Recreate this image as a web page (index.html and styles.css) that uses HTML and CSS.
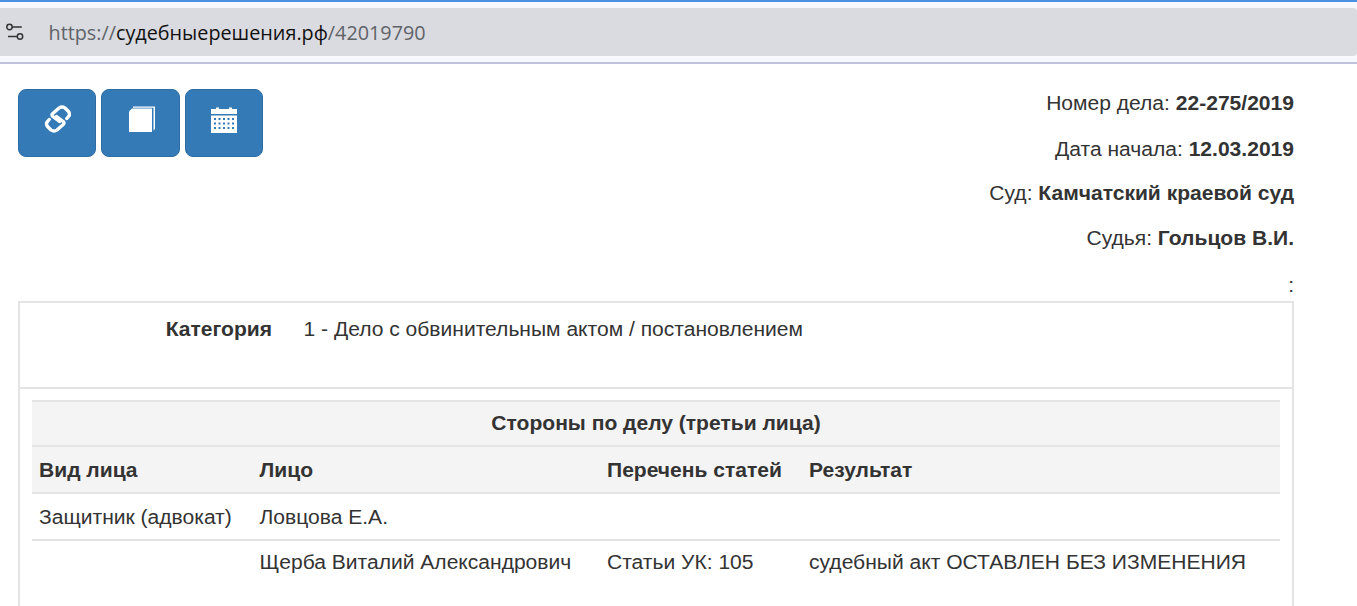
FILE: index.html
```html
<!DOCTYPE html>
<html lang="ru">
<head>
<meta charset="utf-8">
<title>Дело 22-275/2019</title>
<link rel="stylesheet" href="styles.css">
</head>
<body>
<header class="chrome">
  <div class="addr">
    <svg class="tune" width="20" height="18" viewBox="0 0 20 18" fill="none" stroke="#333" stroke-width="1.5"><circle cx="4.5" cy="4" r="2.7"/><path d="M7.2 4H16.800"/><circle cx="15" cy="13.500" r="2.7"/><path d="M3 13.500H12.300"/></svg>
    <span class="url"><span class="dim">https://</span>судебныерешения.рф<span class="dim">/42019790</span></span>
  </div>
</header>
<main class="page">
  <div class="top">
    <div class="btns">
      <a class="btn b1"><svg width="28" height="28" viewBox="-1 0 28 28" fill="none" stroke="#fff" stroke-width="3.400" stroke-linecap="round" stroke-linejoin="round"><path d="M15.500 16.500L8.800 11.500Q7.300 10 8.800 8.500L15 3Q18 .8 21 3L24.500 6.500Q26.500 9.500 24.500 11.500L22.800 13.500"/><path transform="rotate(180 14 14)" d="M15.500 16.500L8.800 11.500Q7.300 10 8.800 8.500L15 3Q18 .8 21 3L24.500 6.500Q26.500 9.500 24.500 11.500L22.800 13.500"/></svg></a>
      <a class="btn b2"><svg width="28" height="28" viewBox="-2 0 28 28"><path fill="#fff" d="M0 6.500L3 3.500H23V27H0z"/><path fill="#fff" d="M4 1.500H26V24L24.500 25.500V2.800H4z"/></svg></a>
      <a class="btn b3"><svg width="28" height="28" viewBox="0 0 28 28"><path fill="#fff" fill-rule="evenodd" d="M1 4h5V2.500h3V4h10V2.500h3V4h5v5H1zM1 10.500h26V28H1zM4 13v2h2v-2zm4.500 0v2h2v-2zm4.500 0v2h2v-2zm4.500 0v2h2v-2zm4.500 0v2h2v-2zM4 17.500v2h2v-2zm4.500 0v2h2v-2zm4.500 0v2h2v-2zm4.500 0v2h2v-2zm4.500 0v2h2v-2zM4 22v2h2v-2zm4.500 0v2h2v-2zm4.500 0v2h2v-2zm4.500 0v2h2v-2zm4.500 0v2h2v-2z"/></svg></a>
    </div>
    <div class="info">
      <p>Номер дела: <b>22-275/2019</b></p>
      <p>Дата начала: <b>12.03.2019</b></p>
      <p>Суд: <b>Камчатский краевой суд</b></p>
      <p>Судья: <b>Гольцов В.И.</b></p>
      <p>:</p>
    </div>
  </div>
  <section class="panel">
    <div class="cat">
      <b class="cat-l">Категория</b>
      <span>1 - Дело с обвинительным актом / постановлением</span>
    </div>
    <div class="body">
      <table>
        <colgroup><col class="c1"><col class="c2"><col class="c3"><col></colgroup>
        <thead>
          <tr class="h"><th colspan="4" class="title">Стороны по делу (третьи лица)</th></tr>
          <tr class="h"><th>Вид лица</th><th>Лицо</th><th>Перечень статей</th><th>Результат</th></tr>
        </thead>
        <tbody>
          <tr class="r1"><td>Защитник (адвокат)</td><td>Ловцова Е.А.</td><td></td><td></td></tr>
          <tr class="r2"><td></td><td>Щерба Виталий Александрович</td><td>Статьи УК: 105</td><td>судебный акт ОСТАВЛЕН БЕЗ ИЗМЕНЕНИЯ</td></tr>
        </tbody>
      </table>
    </div>
  </section>
</main>
</body>
</html>
```
FILE: styles.css
```css
* { box-sizing: border-box; }
html, body { margin: 0; height: 100%; overflow: hidden; background: #fff; }
body { font-family: "Liberation Sans", Arial, sans-serif; font-size: 21.05px; line-height: 28px; color: #333; }
.chrome { height: 64px; padding-top: 6px; background: #f7f8fd; border-top: 2px solid #4a90e2; border-bottom: 2px solid #c0c0d8; }
.addr { height: 48px; background: #dadbe0; border-radius: 0 4px 4px 0; display: flex; align-items: center; }
.tune { margin-left: 5px; flex: none; }
.url { margin-left: 23.5px; padding-top: 1px; font-family: "Open Sans", sans-serif; font-size: 19.8px; color: #111; }
.dim { color: #5f6368; }
.page { padding: 25px 63px 0 18px; height: 542px; overflow: hidden; }
.top { display: flex; justify-content: space-between; align-items: flex-start; }
.btns { display: flex; gap: 5px; }
.btn { height: 68px; display: flex; align-items: center; justify-content: center; background: #337ab7; border: 1px solid #2e6da4; border-radius: 8px; padding-bottom: 8px; }
.b1 { width: 78px; }
.b2 { width: 79px; }
.b3 { width: 78px; }
.info { text-align: right; }
.info p { margin: 0 0 17px; height: 28px; }
.info p:nth-child(1) { margin-bottom: 18px; }
.info p:nth-child(2) { margin-bottom: 16px; }
.info p:last-child { margin: 0; padding-top: 2px; height: 32px; }
.panel { height: 400px; border: 2px solid #e4e4e4; border-bottom: 0; }
.cat { height: 86px; border-bottom: 2px solid #e4e4e4; display: flex; padding-top: 12px; }
.cat-l { width: 252px; text-align: right; margin-right: 31.5px; }
.body { padding: 11px 12px 0; }
table { width: 100%; border-collapse: collapse; table-layout: fixed; }
.c1 { width: 220.500px; }
.c2 { width: 347.500px; }
.c3 { width: 202px; }
th, td { padding: 8px 7px; text-align: left; vertical-align: top; border-top: 2px solid #e4e4e4; height: 47px; }
th { font-weight: 700; padding-top: 9px; }
.title { text-align: center; height: 45px; padding-top: 7px; padding-bottom: 8px; }
.h th { background: #f4f4f4; }
thead { border-bottom: 2px solid #e4e4e4; }
.r1 td { padding-top: 9px; }
.r2 td { padding-top: 7px; }
```
